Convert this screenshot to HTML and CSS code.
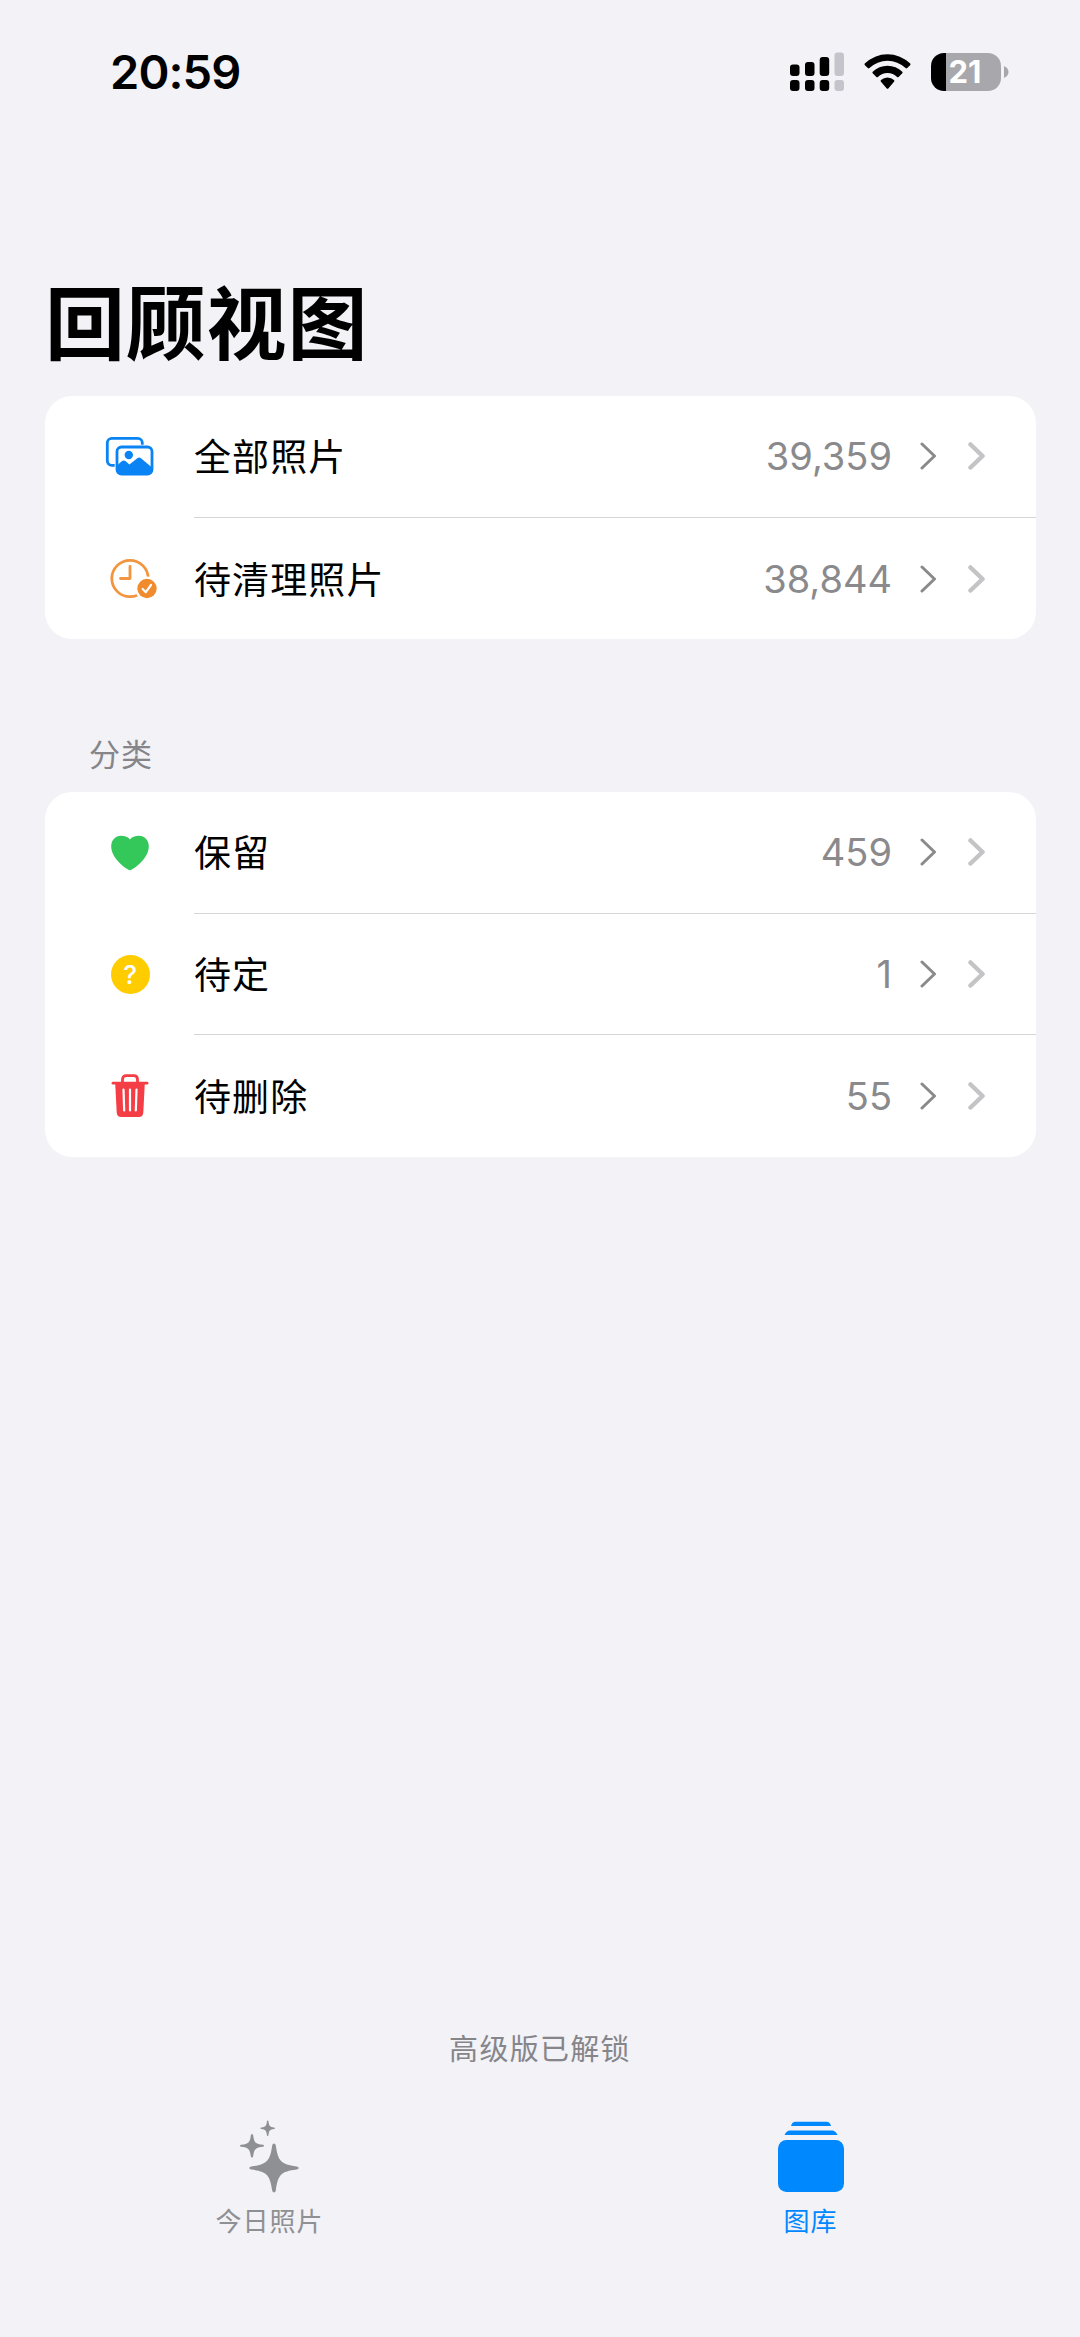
FILE: index.html
```html
<!DOCTYPE html>
<html lang="zh-CN">
<head>
    <meta charset="UTF-8">
    <meta name="viewport" content="width=device-width, initial-scale=1.0">
    <title>回顾视图</title>
    <link rel="stylesheet" href="styles.css">
</head>
<body>
    <div class="status-bar">
        <span class="time">20:59</span>
        <div class="status-icons">
            <svg class="signal" width="54" height="40" viewBox="0 0 54 40">
                <rect x="0" y="12.5" width="9.5" height="11.5" rx="3"/>
                <rect x="15" y="10" width="9.5" height="14" rx="3"/>
                <rect x="29.7" y="5" width="9.5" height="19" rx="3"/>
                <rect x="0" y="28" width="9.5" height="11" rx="3"/>
                <rect x="15" y="28" width="9.5" height="11" rx="3"/>
                <rect x="29.7" y="28" width="9.5" height="11" rx="3"/>
                <rect class="off" x="44.5" y="0.5" width="9.5" height="23.5" rx="3"/>
                <rect class="off" x="44.5" y="28" width="9.5" height="11" rx="3"/>
            </svg>
            <svg class="wifi" width="47" height="36" viewBox="0 0 47 36">
                <path d="M0.8 9.6 A32.5 32.5 0 0 1 46.2 9.6 Q46.8 10.4 46.1 11.2 L43.2 14.1 Q42.4 14.7 41.6 14 A26.3 26.3 0 0 0 5.4 14 Q4.6 14.7 3.8 14.1 L0.9 11.2 Q0.2 10.4 0.8 9.6Z"/>
                <path d="M8.7 17.8 A21 21 0 0 1 38.3 17.8 Q39 18.5 38.3 19.3 L34.6 22.9 Q33.9 23.5 33.1 22.9 A14 14 0 0 0 13.9 22.9 Q13.1 23.5 12.4 22.9 L8.7 19.3 Q8 18.5 8.7 17.8Z"/>
                <path d="M17 26 A9.6 9.6 0 0 1 30 26 Q30.9 26.9 30 27.8 L24.5 34.3 Q23.5 35.3 22.5 34.3 L17 27.8 Q16.1 26.9 17 26Z"/>
            </svg>
            <div class="battery">
                <span class="battery-body">21</span>
                <svg width="5" height="12" viewBox="0 0 5 12"><path d="M0 0 Q4.5 2.2 4.5 6 Q4.5 9.8 0 12Z"/></svg>
            </div>
        </div>
    </div>

    <h1>回顾视图</h1>

    <div class="card">
        <div class="row">
            <div class="row-icon">
                <svg width="50" height="42" viewBox="0 0 50 42">
                    <rect x="2.3" y="2.3" width="35" height="27" rx="4.5" fill="none" stroke="#0a84f5" stroke-width="2.8"/>
                    <rect x="9.7" y="8.7" width="38" height="31" rx="5.5" fill="#fff"/>
                    <rect x="12" y="11" width="35" height="27" rx="4.5" fill="#fff" stroke="#0a84f5" stroke-width="2.8"/>
                    <circle cx="23.8" cy="19" r="4.2" fill="#0a84f5"/>
                    <path d="M12 29.5 L17 25 Q19 23.8 20.8 25.3 L24.4 28.6 L32.3 22.2 Q34.3 20.8 36.3 22.4 L47 31.5 V35 Q47 38 43.5 38 H16 Q12 38 12 34Z" fill="#0a84f5"/>
                </svg>
            </div>
            <div class="row-body">
                <span class="label">全部照片</span>
                <span class="count">39,359</span>
                <svg class="chevron" width="17" height="28" viewBox="0 0 17 28"><path d="M2 2 L14.5 14 L2 26"/></svg>
                <svg class="chevron light" width="18" height="28" viewBox="0 0 18 28"><path d="M2.5 2.5 L14.5 14 L2.5 25.5"/></svg>
            </div>
        </div>
        <div class="row">
            <div class="row-icon">
                <svg class="clock" width="48" height="42" viewBox="0 0 48 42">
                    <circle cx="20" cy="20.5" r="18.2" fill="none" stroke="#f3953f" stroke-width="2.8"/>
                    <path d="M20 8.5 V20.5 H10.5" fill="none" stroke="#f3953f" stroke-width="2.8" stroke-linecap="round" stroke-linejoin="round"/>
                    <circle cx="37" cy="30.5" r="12" fill="#fff"/>
                    <circle cx="37" cy="30.5" r="9.7" fill="#f08c2d"/>
                    <path d="M32.7 31 L35.8 34.2 L41 27" fill="none" stroke="#fff" stroke-width="2.2" stroke-linecap="round" stroke-linejoin="round"/>
                </svg>
            </div>
            <div class="row-body">
                <span class="label">待清理照片</span>
                <span class="count">38,844</span>
                <svg class="chevron" width="17" height="28" viewBox="0 0 17 28"><path d="M2 2 L14.5 14 L2 26"/></svg>
                <svg class="chevron light" width="18" height="28" viewBox="0 0 18 28"><path d="M2.5 2.5 L14.5 14 L2.5 25.5"/></svg>
            </div>
        </div>
    </div>

    <h2>分类</h2>

    <div class="card">
        <div class="row">
            <div class="row-icon">
                <svg width="40" height="36" viewBox="0 0 40 36">
                    <path d="M20 35.2 C17.5 35.2 1.2 24 1.2 11.5 C1.2 5 5.6 0.8 10.9 0.8 C15 0.8 18.2 2 20 4.6 C21.8 2 25 0.8 29.1 0.8 C34.4 0.8 38.8 5 38.8 11.5 C38.8 24 22.5 35.2 20 35.2Z" fill="#34c759"/>
                </svg>
            </div>
            <div class="row-body">
                <span class="label">保留</span>
                <span class="count">459</span>
                <svg class="chevron" width="17" height="28" viewBox="0 0 17 28"><path d="M2 2 L14.5 14 L2 26"/></svg>
                <svg class="chevron light" width="18" height="28" viewBox="0 0 18 28"><path d="M2.5 2.5 L14.5 14 L2.5 25.5"/></svg>
            </div>
        </div>
        <div class="row">
            <div class="row-icon">
                <span class="question">?</span>
            </div>
            <div class="row-body">
                <span class="label">待定</span>
                <span class="count">1</span>
                <svg class="chevron" width="17" height="28" viewBox="0 0 17 28"><path d="M2 2 L14.5 14 L2 26"/></svg>
                <svg class="chevron light" width="18" height="28" viewBox="0 0 18 28"><path d="M2.5 2.5 L14.5 14 L2.5 25.5"/></svg>
            </div>
        </div>
        <div class="row">
            <div class="row-icon">
                <svg width="38" height="44" viewBox="0 0 38 44">
                    <path d="M11.5 9 V5.5 Q11.5 1.7 15.3 1.7 H22.7 Q26.5 1.7 26.5 5.5 V9" fill="none" stroke="#f53d45" stroke-width="2.8"/>
                    <path d="M2 9.2 H36" stroke="#f53d45" stroke-width="2.8" stroke-linecap="round"/>
                    <path d="M4.2 9 H33.8 L32.3 38.5 Q32 43 27.5 43 H10.5 Q6 43 5.7 38.5Z" fill="#f53d45"/>
                    <path d="M12.5 15.5 L13.2 36.5 M19 15.5 V36.5 M25.5 15.5 L24.8 36.5" stroke="#fff" stroke-width="2.2" stroke-linecap="round"/>
                </svg>
            </div>
            <div class="row-body">
                <span class="label">待删除</span>
                <span class="count">55</span>
                <svg class="chevron" width="17" height="28" viewBox="0 0 17 28"><path d="M2 2 L14.5 14 L2 26"/></svg>
                <svg class="chevron light" width="18" height="28" viewBox="0 0 18 28"><path d="M2.5 2.5 L14.5 14 L2.5 25.5"/></svg>
            </div>
        </div>
    </div>

    <div class="footer">
        <p class="premium">高级版已解锁</p>
        <div class="tabs">
            <a class="tab">
                <svg width="60" height="74" viewBox="0 0 60 74">
                    <path d="M34 23.5 Q35.4 23.5 35.8 25.5 C38 41 41 44.5 56.5 46.4 Q58.7 46.8 58.7 48 Q58.7 49.2 56.5 49.6 C41 51.5 38 55 35.8 70.5 Q35.4 72.5 34 72.5 Q32.6 72.5 32.2 70.5 C30 55 27 51.5 11.5 49.6 Q9.3 49.2 9.3 48 Q9.3 46.8 11.5 46.4 C27 44.5 30 41 32.2 25.5 Q32.6 23.5 34 23.5Z"/>
                    <path d="M12 14 Q13 14 13.2 15.5 C14 22.5 15.5 24 22.8 24.8 Q24 25 24 25.8 Q24 26.6 22.8 26.8 C15.5 27.6 14 29.5 13.2 36 Q13 37.5 12 37.5 Q11 37.5 10.8 36 C10 29.5 8.5 27.6 1.2 26.8 Q0 26.6 0 25.8 Q0 25 1.2 24.8 C8.5 24 10 22.5 10.8 15.5 Q11 14 12 14Z"/>
                    <path d="M27.7 0.5 Q28.4 0.5 28.5 1.5 C29 6 30 7 34 7.5 Q35 7.6 35 8.2 Q35 8.8 34 8.9 C30 9.4 29 10.5 28.5 15 Q28.4 16 27.7 16 Q27 16 26.9 15 C26.4 10.5 25.4 9.4 21.4 8.9 Q20.4 8.8 20.4 8.2 Q20.4 7.6 21.4 7.5 C25.4 7 26.4 6 26.9 1.5 Q27 0.5 27.7 0.5Z"/>
                </svg>
                <span>今日照片</span>
            </a>
            <a class="tab active">
                <svg width="68" height="74" viewBox="0 0 68 74">
                    <path d="M14 6 Q15.2 1.8 18.5 1.8 H49.5 Q52.8 1.8 54 6Z"/>
                    <path d="M7.5 15 Q9.5 10.5 13 10.5 H55 Q58.5 10.5 60.5 15Z"/>
                    <rect x="1" y="20" width="66" height="52" rx="8.5"/>
                </svg>
                <span>图库</span>
            </a>
        </div>
    </div>
</body>
</html>
```
FILE: styles.css
```css
* {
    margin: 0;
    padding: 0;
    box-sizing: border-box;
}

body {
    background-color: #f2f2f7;
    font-family: Inter, 'Noto Sans CJK SC', sans-serif;
    color: #000;
    height: 2337px;
    display: flex;
    flex-direction: column;
}

.status-bar {
    height: 143px;
    padding: 0 71px 0 110px;
    display: flex;
    justify-content: space-between;
    align-items: center;
}

.time {
    font-size: 47px;
    font-weight: 600;
    letter-spacing: -0.9px;
}

.status-icons {
    display: flex;
    align-items: center;
}

.signal .off {
    fill: #c5c4ca;
}

.wifi {
    margin: 0 20px 0 20px;
}

.battery {
    display: flex;
    align-items: center;
    gap: 3px;
}

.battery svg {
    fill: #a8a8ac;
}

.battery-body {
    width: 70px;
    height: 38px;
    padding-right: 2px;
    border-radius: 13px;
    background: linear-gradient(to right, #000 15px, #a8a8ac 15px);
    color: #fff;
    font-size: 31px;
    font-weight: 700;
    line-height: 38px;
    text-align: center;
}

h1 {
    height: 253px;
    padding: 121px 45px 0;
    font-size: 80px;
    font-weight: 700;
    line-height: 120px;
    letter-spacing: 0.8px;
}

h2 {
    height: 152.6px;
    padding: 93px 89px 0;
    font-size: 31px;
    font-weight: 400;
    line-height: 46px;
    letter-spacing: 1px;
    color: #85858a;
}

.card {
    margin: 0 44px 0 45px;
    background-color: #fff;
    border-radius: 27px;
}

.row {
    height: 121.7px;
    display: flex;
}

.row-icon {
    width: 149px;
    padding-left: 21px;
    display: flex;
    align-items: center;
    justify-content: center;
}

.clock {
    margin-left: 7px;
}

.row-body {
    flex: 1;
    display: flex;
    align-items: center;
    padding-right: 50px;
    border-bottom: 1.5px solid #d6d6d9;
}

.row:last-child .row-body {
    border-bottom: none;
}

.label {
    flex: 1;
    padding-bottom: 2px;
    font-size: 37px;
    letter-spacing: 1.1px;
}

.count {
    font-size: 38px;
    color: #8a8a8d;
}

.chevron {
    margin-left: 28px;
    fill: none;
    stroke: #8a8a8d;
    stroke-width: 3;
    stroke-linecap: round;
    stroke-linejoin: round;
}

.chevron.light {
    margin-left: 31px;
    stroke: #c4c4c7;
    stroke-width: 4.5;
}

.question {
    width: 39px;
    height: 39px;
    border-radius: 50%;
    background-color: #ffcc00;
    color: #fff;
    font-size: 26px;
    font-weight: 500;
    line-height: 39px;
    text-align: center;
}

.footer {
    margin-top: auto;
    height: 312px;
}

.premium {
    font-size: 29px;
    letter-spacing: 1.3px;
    line-height: 50px;
    text-align: center;
    color: #85858a;
}

.tabs {
    display: flex;
    padding-top: 45px;
}

.tab {
    flex: 1;
    display: flex;
    flex-direction: column;
    align-items: center;
    color: #8e9094;
}

.tab:first-child {
    padding-right: 2px;
}

.tab svg {
    height: 74px;
    fill: currentColor;
}

.tab span {
    margin-top: 8px;
    font-size: 26px;
    line-height: 40px;
    letter-spacing: 1px;
}

.tab.active {
    color: #0088ff;
}
```
